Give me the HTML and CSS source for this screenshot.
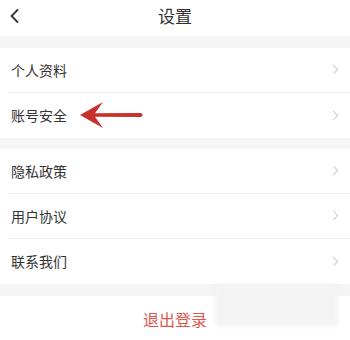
FILE: index.html
```html
<!DOCTYPE html>
<html lang="zh">
<head>
<meta charset="utf-8">
<link rel="stylesheet" href="styles.css">
</head>
<body>
<div class="page">
  <header class="nav">
    <svg class="back" width="12" height="16" viewBox="0 0 12 16"><path d="M9 1.5 L2.5 8 L9 14.5" fill="none" stroke="#333" stroke-width="1.8"/></svg>
    <span class="title">设置</span>
  </header>
  <div class="gap"></div>
  <ul class="group">
    <li class="row"><span>个人资料</span><i class="chev"></i></li>
    <li class="row"><span>账号安全</span>
      <svg class="pointer" width="70" height="30" viewBox="0 0 70 30"><path d="M2 15 L25 2 L17 13.2 L63 13 Q66 15 63 17 L17 16.8 L25 28 Z" fill="#c9302c"/></svg>
      <i class="chev"></i></li>
  </ul>
  <div class="gap gap-sm"></div>
  <ul class="group">
    <li class="row"><span>隐私政策</span><i class="chev"></i></li>
    <li class="row"><span>用户协议</span><i class="chev"></i></li>
    <li class="row"><span>联系我们</span><i class="chev"></i></li>
  </ul>
  <div class="gap"></div>
  <div class="logout"><span>退出登录</span><div class="mask"></div></div>
</div>
</body>
</html>
```
FILE: styles.css
```css
* { box-sizing: border-box; }
html, body { margin: 0; padding: 0; background: #fff; }
body { font-family: "Noto Sans CJK SC", "Noto Sans", sans-serif; color: #333; }
.page { width: 350px; height: 340px; overflow: hidden; }
.nav { height: 36px; position: relative; display: flex; align-items: center; justify-content: center; }
.back { position: absolute; left: 9px; top: 8px; }
.title { font-size: 17px; color: #333; line-height: 1; margin-top: -6px; }
.gap { height: 12px; background: #f5f5f5; }
.gap-sm { height: 11px; }
.group { list-style: none; margin: 0; padding: 0 0 0 8px; }
.row { height: 45px; display: flex; align-items: center; justify-content: space-between; padding: 0 13px 1px 3px; border-bottom: 1px solid #f0f0f0; font-size: 14px; position: relative; }
.row:last-child { border-bottom: none; }
.chev { width: 7px; height: 7px; border-top: 1.2px solid #ccc; border-right: 1.2px solid #ccc; transform: rotate(45deg); }
.pointer { position: absolute; left: 70px; top: 7px; }
.logout { height: 50px; display: flex; align-items: center; justify-content: center; position: relative; }
.logout span { color: #e0574f; font-size: 16px; position: relative; z-index: 1; margin-top: -5px; }
.mask { position: absolute; left: 215px; top: -12px; width: 123px; height: 42px; background: #f3f3f3; filter: blur(2px); }
```
